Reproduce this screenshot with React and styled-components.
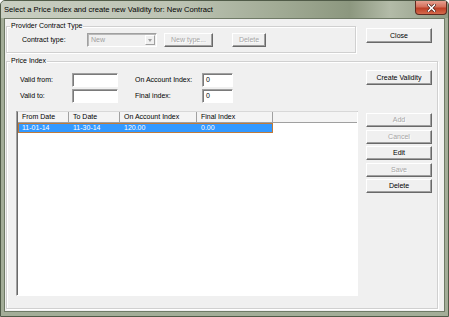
import styled, { createGlobalStyle } from 'styled-components'

const GlobalStyle = createGlobalStyle`
  html, body {
    margin:0;
    padding:0;
    background:#ffffff;
  }
  body {
    font-family:"Liberation Sans", Arial, sans-serif;
    font-size:7px;
    color:#000;
  }
`

const Window = styled.div`
  width:449px;
  height:317px;
  box-sizing:border-box;
  border:1px solid #505b48;
  border-radius:5px 5px 0 0;
  background:#a3ad98;
  display:flex;
  flex-direction:column;
  overflow:hidden;
`
const TitleBar = styled.div`
  height:17px;
  flex:none;
  display:flex;
  align-items:flex-start;
  background:linear-gradient(to right, #c8cec1 0%, #bcc3b3 40%, #a1ab95 62%, #8c977f 78%, #b3bba8 87%, #8f9a83 100%);
`
const Title = styled.div`
  font-size:7.6px;
  line-height:17px;
  padding-left:3px;
  color:#000;
  white-space:nowrap;
`
const CloseX = styled.div`
  margin-left:auto;
  margin-right:1px;
  width:32px;
  height:14px;
  box-sizing:border-box;
  border:1px solid #5e2a20;
  border-top:none;
  border-radius:0 0 4px 4px;
  background:linear-gradient(#e7a191 0%, #d4705b 45%, #bd3f26 55%, #d46a4c 100%);
  display:flex;
  align-items:center;
  justify-content:center;
`
const Frame = styled.div`
  flex:1;
  display:flex;
  padding:0 3px 4px;
  min-height:0;
`
const Client = styled.div`
  flex:1;
  box-sizing:border-box;
  border:1px solid #6f7a66;
  background:#f0f0f0;
  padding:2px 6px 2px 1px;
  display:flex;
  flex-direction:column;
  gap:3px;
`
const TopRow = styled.div`
  display:flex;
  align-items:flex-start;
  gap:10px;
`
const Group = styled.fieldset`
  margin:0;
  padding:0;
  min-width:0;
  box-sizing:border-box;
  border:1px solid #d0d0d0;
  box-shadow:1px 1px 0 #ffffff, inset 1px 1px 0 #ffffff;
  width:${p => p.$width ? `${p.$width}px` : 'auto'};
  flex:${p => p.$grow ? 1 : 'none'};
  display:flex;
  flex-direction:column;
`
const Legend = styled.legend`
  margin-left:3px;
  padding:0 1px;
  font-size:7px;
  line-height:10px;
`
const ProviderBody = styled.div`
  display:flex;
  align-items:center;
  padding:2px 0 5px 15px;
`
const FieldLabel = styled.span`
  width:${p => p.$width ? `${p.$width}px` : 'auto'};
  flex:none;
  white-space:nowrap;
  line-height:14px;
`
const Combo = styled.div`
  width:70px;
  height:14px;
  box-sizing:border-box;
  border:1px solid;
  border-color:#a0a0a0 #ffffff #ffffff #a0a0a0;
  box-shadow:inset 1px 1px 0 #b8b8b8;
  background:#f0f0f0;
  display:flex;
  align-items:stretch;
  color:#a0a0a0;
`
const ComboText = styled.span`
  flex:1;
  padding-left:3px;
  line-height:12px;
`
const ComboArrow = styled.span`
  width:10px;
  margin:1px 1px 1px 0;
  box-sizing:border-box;
  border:1px solid;
  border-color:#ffffff #a0a0a0 #a0a0a0 #ffffff;
  background:#f0f0f0;
  display:flex;
  align-items:center;
  justify-content:center;
  &::after {
    content:'';
    border-left:2.5px solid transparent;
    border-right:2.5px solid transparent;
    border-top:3px solid #a0a0a0;
  }
`
const Button = styled.button`
  width:${p => p.$width || 66}px;
  height:${p => p.$height || 15}px;
  flex:none;
  margin:0;
  margin-left:${p => p.$ml || 0}px;
  margin-top:${p => p.$mt || 0}px;
  padding:0;
  box-sizing:border-box;
  border:1px solid;
  border-color:#ffffff #696969 #696969 #ffffff;
  box-shadow:inset -1px -1px 0 #a0a0a0;
  background:#f0f0f0;
  font-family:"Liberation Sans", Arial, sans-serif;
  font-size:7px;
  line-height:12px;
  color:${p => p.disabled ? '#a6a6a6' : '#000'};
  text-shadow:${p => p.disabled ? '1px 1px 0 #ffffff' : 'none'};
`
const PriceBody = styled.div`
  flex:1;
  display:grid;
  grid-template-columns:342px 66px;
  grid-template-rows:auto 1fr;
  column-gap:8px;
  row-gap:8px;
  padding:4px 5px 12px 9px;
  min-height:0;
`
const Fields = styled.div`
  display:grid;
  grid-template-columns:52px 46px 84px 31px;
  grid-auto-rows:14px;
  row-gap:2px;
  margin-top:3px;
  padding-left:4px;
  align-items:center;
  & > :nth-child(4n + 3) {
    padding-left:17px;
  }
`
const Input = styled.div`
  height:14px;
  box-sizing:border-box;
  border:1px solid;
  border-color:#a0a0a0 #ffffff #ffffff #a0a0a0;
  box-shadow:inset 1px 1px 0 #7a7a7a;
  background:#ffffff;
  padding-left:3px;
  line-height:12px;
`
const RightStack = styled.div`
  display:flex;
  flex-direction:column;
  gap:2.5px;
  padding-top:2px;
`
const List = styled.div`
  box-sizing:border-box;
  border:1px solid;
  border-color:#a0a0a0 #ffffff #ffffff #a0a0a0;
  box-shadow:inset 1px 1px 0 #696969;
  background:#ffffff;
  padding:0 0 0 1px;
  display:flex;
  flex-direction:column;
`
const HeaderRow = styled.div`
  display:flex;
  height:10px;
  border-top:1px solid #d8d8d8;
  border-bottom:1px solid #a0a0a0;
  background:#f4f4f4;
  box-sizing:content-box;
  margin-top:-1px;
`
const HeadCell = styled.div`
  width:${p => p.$w}px;
  flex:${p => p.$w ? 'none' : 1};
  box-sizing:border-box;
  border-right:${p => p.$w ? '1px solid #a0a0a0' : 'none'};
  padding-left:4px;
  line-height:10px;
  white-space:nowrap;
  overflow:hidden;
`
const DataRow = styled.div`
  display:flex;
  height:10px;
`
const Selection = styled.div`
  display:flex;
  box-sizing:border-box;
  background:#3399ff;
  color:#ffffff;
  outline:1px solid #c07b3a;
  outline-offset:-1px;
`
const Cell = styled.div`
  width:${p => p.$w}px;
  flex:none;
  box-sizing:border-box;
  padding-left:4px;
  line-height:10px;
  white-space:nowrap;
`

const columns = [
  { title: 'From Date', w: 51 },
  { title: 'To Date', w: 51 },
  { title: 'On Account Index', w: 77 },
  { title: 'Final Index', w: 76 }
]
const rows = [['11-01-14', '11-30-14', '120.00', '0.00']]

export default function App () {
  return (
    <>
      <GlobalStyle />
      <Window>
        <TitleBar>
          <Title>Select a Price Index and create new Validity for: New Contract</Title>
          <CloseX>
            <svg width='9' height='8' viewBox='0 0 9 8'>
              <path d='M1.5 1 L7.5 7 M7.5 1 L1.5 7' stroke='#4a1d14' strokeWidth='3' strokeLinecap='square' />
              <path d='M1.5 1 L7.5 7 M7.5 1 L1.5 7' stroke='#ffffff' strokeWidth='1.6' strokeLinecap='square' />
            </svg>
          </CloseX>
        </TitleBar>
        <Frame>
          <Client>
            <TopRow>
              <Group $width={350}>
                <Legend>Provider Contract Type</Legend>
                <ProviderBody>
                  <FieldLabel $width={65}>Contract type:</FieldLabel>
                  <Combo>
                    <ComboText>New</ComboText>
                    <ComboArrow />
                  </Combo>
                  <Button disabled $width={49} $height={14} $ml={7}>New type...</Button>
                  <Button disabled $width={34} $height={14} $ml={19}>Delete</Button>
                </ProviderBody>
              </Group>
              <Button $mt={7}>Close</Button>
            </TopRow>
            <Group $grow>
              <Legend>Price Index</Legend>
              <PriceBody>
                <Fields>
                  <FieldLabel>Valid from:</FieldLabel>
                  <Input />
                  <FieldLabel>On Account Index:</FieldLabel>
                  <Input>0</Input>
                  <FieldLabel>Valid to:</FieldLabel>
                  <Input />
                  <FieldLabel>Final index:</FieldLabel>
                  <Input>0</Input>
                </Fields>
                <div>
                  <Button>Create Validity</Button>
                </div>
                <List>
                  <HeaderRow>
                    {columns.map(c => <HeadCell key={c.title} $w={c.w}>{c.title}</HeadCell>)}
                    <HeadCell />
                  </HeaderRow>
                  {rows.map((r, i) =>
                    <DataRow key={i}>
                      <Selection>
                        {r.map((v, j) => <Cell key={j} $w={columns[j].w}>{v}</Cell>)}
                      </Selection>
                    </DataRow>
                  )}
                </List>
                <RightStack>
                  <Button disabled $height={14}>Add</Button>
                  <Button disabled $height={14}>Cancel</Button>
                  <Button $height={14}>Edit</Button>
                  <Button disabled $height={14}>Save</Button>
                  <Button $height={14}>Delete</Button>
                </RightStack>
              </PriceBody>
            </Group>
          </Client>
        </Frame>
      </Window>
    </>
  )
}
